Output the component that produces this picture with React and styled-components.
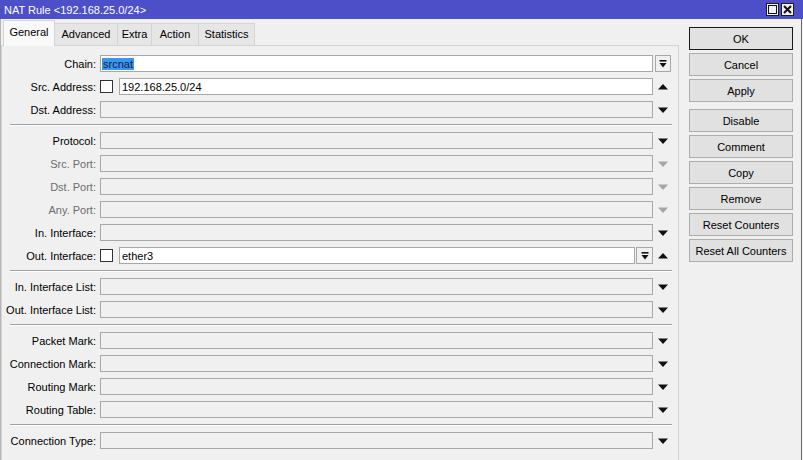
import React from "react";
import styled, { createGlobalStyle } from "styled-components";

const GlobalStyle = createGlobalStyle`
  html, body { margin: 0; padding: 0; background: #f0f0f0; }
  body { font-family: "Liberation Sans", Arial, sans-serif; font-size: 11px; color: #000; }
  * { box-sizing: border-box; }
`;

const Window = styled.div`
  width: 803px;
  height: 460px;
  overflow: hidden;
  display: flex;
  flex-direction: column;
  background: #f0f0f0;
`;

const TitleBar = styled.div`
  height: 19px;
  flex-shrink: 0;
  background: #4c4fc8;
  color: #fff;
  display: flex;
  align-items: center;
  justify-content: space-between;
  padding: 0 9px 0 4px;
  font-size: 11px;
`;

const TitleButtons = styled.div`
  display: flex;
  gap: 2px;
`;

const TitleBtn = styled.div`
  width: 13px;
  height: 13px;
  background: #f0f0f0;
  border: 1px solid #1c1c1c;
  display: flex;
  align-items: center;
  justify-content: center;
`;

const Body = styled.div`
  flex: 1;
  display: flex;
  width: 802px;
  border-left: 1px solid #b5b5b5;
  border-right: 1px solid #6a6a6a;
`;

const LeftCol = styled.div`
  width: 678px;
  display: flex;
  flex-direction: column;
  padding-top: 2px;
`;

const TabBar = styled.div`
  display: flex;
  align-items: flex-end;
  height: 25px;
  padding-left: 3px;
  margin-bottom: -1px;
  position: relative;
  z-index: 1;
`;

const Tab = styled.div`
  width: ${(p) => p.$w}px;
  height: ${(p) => (p.$active ? 26 : 23)}px;
  margin-left: -1px;
  display: flex;
  align-items: center;
  justify-content: center;
  padding-bottom: ${(p) => (p.$active ? 3 : 1)}px;
  border: 1px solid #d4d4d4;
  border-bottom: ${(p) => (p.$active ? "none" : "1px solid #d4d4d4")};
  background: ${(p) => (p.$active ? "#f9f9f9" : "#e6e6e6")};
  white-space: nowrap;
`;

const Panel = styled.div`
  flex: 1;
  border: 1px solid #d4d4d4;
  border-bottom: none;
  background: #f0f0f0;
  padding-top: 9px;
  display: flex;
  flex-direction: column;
  gap: 6px;
`;

const Row = styled.div`
  display: flex;
  align-items: center;
  height: 17px;
`;

const Label = styled.div`
  width: 94px;
  margin-right: 4px;
  flex-shrink: 0;
  text-align: right;
  white-space: nowrap;
  color: ${(p) => (p.$dim ? "#6d6d6d" : "#000")};
`;

const Control = styled.div`
  width: 553px;
  display: flex;
  align-items: center;
  gap: 6px;
`;

const Combo = styled.div`
  flex: 1;
  display: flex;
  gap: 1px;
`;

const Input = styled.div`
  flex: 1;
  height: 17px;
  border: 1px solid #a8a8a8;
  background: ${(p) => (p.$white ? "#fff" : "#f0f0f0")};
  padding: 0 2px;
  display: flex;
  align-items: center;
  white-space: nowrap;
`;

const Selected = styled.span`
  background: #3c96f0;
  color: #10204c;
  padding: 0 1px;
  margin-left: -1px;
`;

const Check = styled.div`
  width: 13px;
  height: 13px;
  flex-shrink: 0;
  border: 1px solid #333;
  background: #fff;
`;

const DropBox = styled.div`
  width: ${(p) => p.$w || 16}px;
  height: 17px;
  flex-shrink: 0;
  border: 1px solid #a8a8a8;
  background: #f0f0f0;
  display: flex;
  align-items: center;
  justify-content: center;
`;

const Side = styled.div`
  width: 20px;
  display: flex;
  align-items: center;
  justify-content: center;
`;

const Separator = styled.div`
  height: 2px;
  margin: 0 6px 0 8px;
  border-top: 1px solid #a0a0a0;
  border-bottom: 1px solid #ffffff;
`;

const RightCol = styled.div`
  width: 104px;
  margin-left: 10px;
  padding-top: 8px;
  display: flex;
  flex-direction: column;
  gap: 3px;
`;

const Button = styled.div`
  height: 23px;
  border: 1px solid ${(p) => (p.$default ? "#1a1a1a" : "#adadad")};
  background: #e1e1e1;
  display: flex;
  align-items: center;
  justify-content: center;
  white-space: nowrap;
  margin-top: ${(p) => (p.$spaced ? 4 : 0)}px;
`;

const Arrow = ({ up, dim }) => (
  <svg width="10" height="6" viewBox="0 0 10 6">
    <polygon
      points={up ? "0,5.5 10,5.5 5,0" : "0,0.5 10,0.5 5,6"}
      fill={dim ? "#a5a5a5" : "#111"}
    />
  </svg>
);

const DropIcon = () => (
  <svg width="8" height="8" viewBox="0 0 8 8">
    <rect x="0.5" y="0" width="7" height="1.6" fill="#111" />
    <polygon points="0.5,3 7.5,3 4,7.5" fill="#111" />
  </svg>
);

const MaxIcon = () => (
  <svg width="9" height="9" viewBox="0 0 9 9">
    <rect x="0.5" y="0.5" width="8" height="8" fill="none" stroke="#111" strokeWidth="1" />
  </svg>
);

const CloseIcon = () => (
  <svg width="9" height="9" viewBox="0 0 9 9">
    <path d="M1 1 L8 8 M8 1 L1 8" stroke="#111" strokeWidth="2" />
  </svg>
);

const tabs = [
  { name: "General", w: 52, active: true },
  { name: "Advanced", w: 64 },
  { name: "Extra", w: 35 },
  { name: "Action", w: 48 },
  { name: "Statistics", w: 57 },
];

const Field = ({ label, dim }) => (
  <Row>
    <Label $dim={dim}>{label}:</Label>
    <Control>
      <Input />
    </Control>
    <Side>
      <Arrow dim={dim} />
    </Side>
  </Row>
);

export default function App() {
  return (
    <>
      <GlobalStyle />
      <Window>
        <TitleBar>
          <span>NAT Rule &lt;192.168.25.0/24&gt;</span>
          <TitleButtons>
            <TitleBtn>
              <MaxIcon />
            </TitleBtn>
            <TitleBtn>
              <CloseIcon />
            </TitleBtn>
          </TitleButtons>
        </TitleBar>
        <Body>
          <LeftCol>
            <TabBar>
              {tabs.map((t) => (
                <Tab key={t.name} $w={t.w} $active={t.active}>
                  {t.name}
                </Tab>
              ))}
            </TabBar>
            <Panel>
              <Row>
                <Label>Chain:</Label>
                <Control>
                  <Input $white>
                    <Selected>srcnat</Selected>
                  </Input>
                </Control>
                <Side>
                  <DropBox>
                    <DropIcon />
                  </DropBox>
                </Side>
              </Row>
              <Row>
                <Label>Src. Address:</Label>
                <Control>
                  <Check />
                  <Input $white>192.168.25.0/24</Input>
                </Control>
                <Side>
                  <Arrow up />
                </Side>
              </Row>
              <Field label="Dst. Address" />
              <Separator />
              <Field label="Protocol" />
              <Field label="Src. Port" dim />
              <Field label="Dst. Port" dim />
              <Field label="Any. Port" dim />
              <Field label="In. Interface" />
              <Row>
                <Label>Out. Interface:</Label>
                <Control>
                  <Check />
                  <Combo>
                    <Input $white>ether3</Input>
                    <DropBox $w={17}>
                      <DropIcon />
                    </DropBox>
                  </Combo>
                </Control>
                <Side>
                  <Arrow up />
                </Side>
              </Row>
              <Separator />
              <Field label="In. Interface List" />
              <Field label="Out. Interface List" />
              <Separator />
              <Field label="Packet Mark" />
              <Field label="Connection Mark" />
              <Field label="Routing Mark" />
              <Field label="Routing Table" />
              <Separator />
              <Field label="Connection Type" />
            </Panel>
          </LeftCol>
          <RightCol>
            <Button $default>OK</Button>
            <Button>Cancel</Button>
            <Button>Apply</Button>
            <Button $spaced>Disable</Button>
            <Button>Comment</Button>
            <Button>Copy</Button>
            <Button>Remove</Button>
            <Button>Reset Counters</Button>
            <Button>Reset All Counters</Button>
          </RightCol>
        </Body>
      </Window>
    </>
  );
}
